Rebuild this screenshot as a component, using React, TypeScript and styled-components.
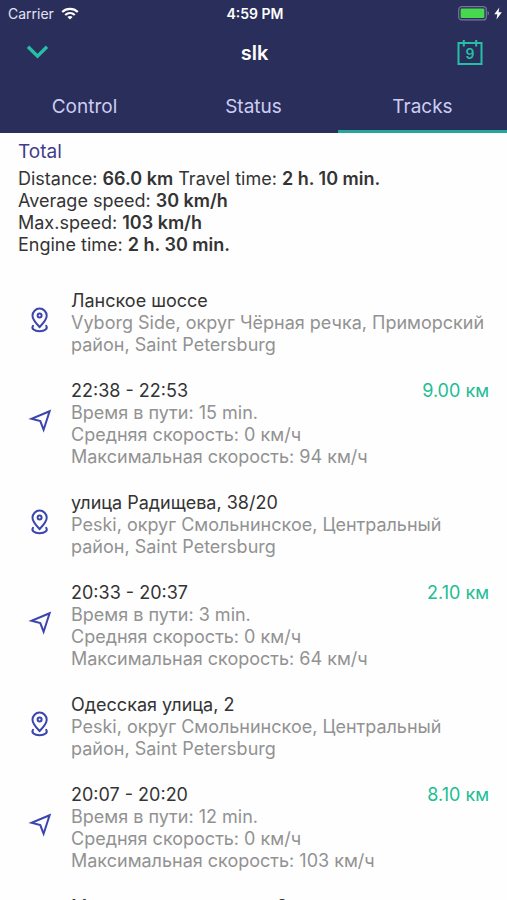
import React, { useState } from "react";
import styled, { createGlobalStyle } from "styled-components";

const GlobalStyle = createGlobalStyle`
  *, *::before, *::after { box-sizing: border-box; }
  body { margin: 0; background: #fefefe; font-family: Inter, Roboto, sans-serif; }
  button { font: inherit; border: 0; background: none; padding: 0; cursor: pointer; }
  h1, h2, h3, p, ul { margin: 0; padding: 0; }
`;

const Screen = styled.div`
  display: flex;
  flex-direction: column;
  height: 100vh;
  overflow: hidden;
`;

const Header = styled.header`
  flex: none;
  background: #2a2e5a;
  color: #ffffff;
`;

const StatusBar = styled.div`
  display: grid;
  grid-template-columns: 1fr auto 1fr;
  align-items: center;
  height: 27px;
  padding: 0 5px 0 8px;
  font-size: 14px;
`;

const Carrier = styled.span`
  display: flex;
  align-items: center;
  gap: 7px;
  color: #e4e4f2;
`;

const Clock = styled.time`
  font-weight: 600;
`;

const Power = styled.span`
  display: flex;
  justify-content: flex-end;
  align-items: center;
  gap: 4px;
`;

const NavBar = styled.div`
  display: grid;
  grid-template-columns: 1fr auto 1fr;
  align-items: center;
  height: 51px;
  padding: 0 24px 0 26px;
`;

const Title = styled.h1`
  font-size: 20px;
  line-height: 24px;
  font-weight: 600;
`;

const IconButton = styled.button<{ $end?: boolean }>`
  display: flex;
  justify-self: ${(p) => (p.$end ? "end" : "start")};
  color: #26bfa6;
`;

const Tabs = styled.div`
  display: grid;
  grid-template-columns: repeat(3, 1fr);
`;

const Tab = styled.button<{ $active: boolean }>`
  height: 55px;
  padding-top: 4px;
  color: #cccdf2;
  font-size: 19px;
  border-bottom: 3px solid ${(p) => (p.$active ? "#26a69a" : "transparent")};
`;

const Content = styled.main`
  flex: 1;
  min-height: 0;
  overflow-y: auto;
  scrollbar-width: none;
  font-size: 18px;
  line-height: 22px;
  color: #343434;
`;

const Summary = styled.section`
  padding: 7px 18px 22px;
`;

const SummaryTitle = styled.h2`
  margin-bottom: 4px;
  font-size: 19px;
  line-height: 24px;
  font-weight: 400;
  color: #3f3d8c;
`;

const Value = styled.strong`
  font-weight: 600;
`;

const List = styled.ul`
  list-style: none;
`;

const Item = styled.li`
  display: grid;
  grid-template-columns: 24px 1fr;
  gap: 0 19px;
  align-items: center;
  padding: 12px 18px 12px 28px;
`;

const ItemIcon = styled.span`
  display: flex;
  padding-bottom: 6px;
  color: #3a45ae;
`;

const ItemHead = styled.div`
  display: flex;
  justify-content: space-between;
`;

const ItemTitle = styled.h3`
  font-size: 18px;
  font-weight: 400;
`;

const Distance = styled.span`
  color: #22bd94;
`;

const Detail = styled.p`
  color: #929292;
`;

const WifiIcon = () => (
  <svg width="18" height="13" viewBox="0 0 18 13" fill="none" stroke="#fff" strokeWidth="2.2" aria-hidden="true">
    <path d="M1.2 5C5.5.9 12.5.9 16.8 5" />
    <path d="M4.2 8C7 5.4 11 5.4 13.8 8" />
    <path d="M9 12.5 6.4 9.9c1.5-1.3 3.7-1.3 5.2 0z" fill="#fff" stroke="none" />
  </svg>
);

const BatteryIcon = () => (
  <svg width="32" height="15" viewBox="0 0 32 15" aria-hidden="true">
    <rect x=".7" y=".7" width="27.6" height="13.2" rx="3" fill="none" stroke="#74769a" strokeWidth="1.2" />
    <rect x="2.6" y="2.6" width="23.8" height="9.4" rx="1.2" fill="#48d84e" />
    <path d="M29.6 5v4.6c1.8-.7 1.8-3.9 0-4.6z" fill="#74769a" />
  </svg>
);

const BoltIcon = () => (
  <svg width="8" height="13" viewBox="0 0 8 13" aria-hidden="true">
    <path d="M5.3.5.3 7.3h3L2.5 12.5 7.8 5.3H4.6z" fill="#fff" />
  </svg>
);

const ChevronIcon = () => (
  <svg width="23" height="18" viewBox="0 0 23 18" fill="none" stroke="currentColor" strokeWidth="3.4" aria-hidden="true">
    <path d="m2 2.8 9.5 9.4L21 2.8" />
  </svg>
);

const CalendarIcon = () => (
  <svg width="26" height="26" viewBox="0 0 26 26" fill="none" stroke="currentColor" strokeWidth="2" aria-hidden="true">
    <path d="M1.5 3h23v21h-23z" />
    <path d="M6.8 0v6.5M19.2 0v6.5" />
    <text x="13" y="19" textAnchor="middle" fontSize="14" fontWeight="600" fill="currentColor" stroke="none">
      9
    </text>
  </svg>
);

const PinIcon = () => (
  <svg width="24" height="26" viewBox="0 0 24 26" fill="none" stroke="currentColor" strokeWidth="2" aria-hidden="true">
    <path d="M11.6 20C8.3 16.5 4.5 12.8 4.5 8.7a7.1 7.1 0 0 1 14.2 0c0 4.1-3.8 7.8-7.1 11.3z" />
    <circle cx="11.6" cy="8.4" r="2" />
    <path d="M5 18.8c-1.8 2.800 1 5.400 6.600 5.400s8.400-2.600 6.600-5.400" strokeLinecap="round" />
  </svg>
);

const ArrowIcon = () => (
  <svg width="24" height="24" viewBox="0 0 24 24" fill="none" stroke="currentColor" strokeWidth="2" aria-hidden="true">
    <path d="M21.6 2.3 3.5 9.7l8.8 2.400 3.300 8.600z" />
  </svg>
);

type Entry = { title: string; details: string[]; distance?: string };

const place = (title: string, address: string): Entry => ({ title, details: [address] });

const track = (title: string, minutes: number, max: number, distance: string): Entry => ({
  title,
  distance,
  details: [`Время в пути: ${minutes} min.`, "Средняя скорость: 0 км/ч", `Максимальная скорость: ${max} км/ч`],
});

const entries: Entry[] = [
  place("Ланское шоссе", "Vyborg Side, округ Чёрная речка, Приморский район, Saint Petersburg"),
  track("22:38 - 22:53", 15, 94, "9.00 км"),
  place("улица Радищева, 38/20", "Peski, округ Смольнинское, Центральный район, Saint Petersburg"),
  track("20:33 - 20:37", 3, 64, "2.10 км"),
  place("Одесская улица, 2", "Peski, округ Смольнинское, Центральный район, Saint Petersburg"),
  track("20:07 - 20:20", 12, 103, "8.10 км"),
  place("Магнитогорская улица 8", "Malaya Okhta, Красногвардейский район, Saint Petersburg"),
];

const tabNames = ["Control", "Status", "Tracks"];

export default function App() {
  const [active, setActive] = useState("Tracks");
  return (
    <Screen>
      <GlobalStyle />
      <Header>
        <StatusBar>
          <Carrier>
            Carrier <WifiIcon />
          </Carrier>
          <Clock>4:59 PM</Clock>
          <Power>
            <BatteryIcon />
            <BoltIcon />
          </Power>
        </StatusBar>
        <NavBar>
          <IconButton aria-label="Collapse">
            <ChevronIcon />
          </IconButton>
          <Title>slk</Title>
          <IconButton $end aria-label="Choose date">
            <CalendarIcon />
          </IconButton>
        </NavBar>
        <Tabs role="tablist">
          {tabNames.map((name) => (
            <Tab key={name} role="tab" aria-selected={name === active} $active={name === active} onClick={() => setActive(name)}>
              {name}
            </Tab>
          ))}
        </Tabs>
      </Header>
      <Content>
        <Summary>
          <SummaryTitle>Total</SummaryTitle>
          <p>
            Distance: <Value>66.0 km</Value> Travel time: <Value>2 h. 10 min.</Value>
          </p>
          <p>
            Average speed: <Value>30 km/h</Value>
          </p>
          <p>
            Max.speed: <Value>103 km/h</Value>
          </p>
          <p>
            Engine time: <Value>2 h. 30 min.</Value>
          </p>
        </Summary>
        <List>
          {entries.map((entry) => (
            <Item key={entry.title}>
              <ItemIcon>{entry.distance ? <ArrowIcon /> : <PinIcon />}</ItemIcon>
              <div>
                <ItemHead>
                  <ItemTitle>{entry.title}</ItemTitle>
                  {entry.distance && <Distance>{entry.distance}</Distance>}
                </ItemHead>
                {entry.details.map((line) => (
                  <Detail key={line}>{line}</Detail>
                ))}
              </div>
            </Item>
          ))}
        </List>
      </Content>
    </Screen>
  );
}
